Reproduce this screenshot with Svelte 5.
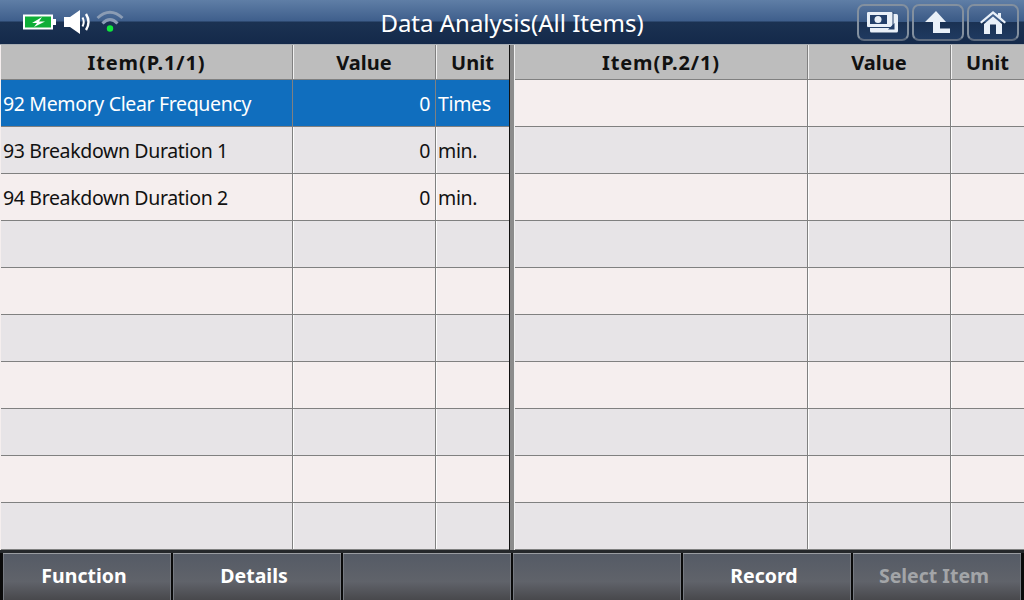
<script>
	const leftRows = [
		{ item: '92 Memory Clear Frequency', value: '0', unit: 'Times' },
		{ item: '93 Breakdown Duration 1', value: '0', unit: 'min.' },
		{ item: '94 Breakdown Duration 2', value: '0', unit: 'min.' }
	];
	const rowCount = Array.from({ length: 10 });
	const footer = [
		{ label: 'Function' },
		{ label: 'Details' },
		{ label: '' },
		{ label: '' },
		{ label: 'Record' },
		{ label: 'Select Item', disabled: true }
	];
</script>

{#snippet table(title, rows, side)}
	<div class="table {side}">
		<div class="row head">
			<div class="cell">{title}</div>
			<div class="cell">Value</div>
			<div class="cell">Unit</div>
		</div>
		{#each rowCount as _, i}
			<div class="row body" class:odd={i % 2 === 1} class:selected={rows[i] && i === 0}>
				<div class="cell item">{rows[i]?.item ?? ''}</div>
				<div class="cell value">{rows[i]?.value ?? ''}</div>
				<div class="cell unit">{rows[i]?.unit ?? ''}</div>
			</div>
		{/each}
	</div>
{/snippet}

<div class="screen">
	<header class="topbar">
		<div class="status">
			<svg width="34" height="16" viewBox="0 0 34 16">
				<rect x="1" y="1.5" width="28" height="13" fill="#0fae37" stroke="#fff" stroke-width="2" />
				<rect x="30" y="5" width="3" height="6" fill="#fff" />
				<path d="M19 3 L9 9 H14 L11 13 L22 7.5 H16 Z" fill="#fff" />
			</svg>
			<svg width="28" height="24" viewBox="0 0 28 24">
				<path d="M0 7 H6 L16 0 V24 L6 17 H0 Z" fill="#fff" />
				<path d="M18.5 7.5 Q21 12 18.5 16.5" fill="none" stroke="#fff" stroke-width="2" />
				<path d="M22 4 Q27 12 22 20" fill="none" stroke="#fff" stroke-width="2.4" />
			</svg>
			<svg class="wifi" width="28" height="26" viewBox="0 0 28 26">
				<path d="M1.5 10 Q14 -1.5 26.5 10" fill="none" stroke="#8b9cb4" stroke-width="3" />
				<path d="M6.5 15.5 Q14 7.5 21.5 15.5" fill="none" stroke="#8b9cb4" stroke-width="3" />
				<circle cx="14" cy="20.5" r="3.2" fill="#10e83c" />
			</svg>
		</div>
		<h1>Data Analysis(All Items)</h1>
		<div class="tools">
			<button type="button" aria-label="Screenshot">
				<svg width="32" height="21" viewBox="0 0 32 21">
					<rect x="3" y="2" width="28" height="18.5" rx="1.5" fill="#e9f0f8" />
					<rect x="-0.5" y="-0.5" width="27" height="16.5" fill="#24406a" />
					<rect x="0" y="0" width="25.5" height="15" rx="1" fill="#e9f0f8" />
					<rect x="3" y="3" width="17" height="9" fill="#24406a" />
					<circle cx="11" cy="7.5" r="3.5" fill="#e9f0f8" />
					<path d="M21 17.5 L27.5 11 V17.5 Z" fill="#24406a" />
				</svg>
			</button>
			<button type="button" aria-label="Back">
				<svg width="26" height="22" viewBox="0 0 26 22">
					<path d="M11 0 L21 11 H15 V17.5 H25 V22 H8 V11 H0 Z" fill="#e9f0f8" />
				</svg>
			</button>
			<button type="button" aria-label="Home">
				<svg width="26" height="23" viewBox="0 0 26 23">
					<path d="M13 0 L18 4 V2 H21 V6.5 L26 11 L24.5 12.5 L13 3 L1.5 12.5 L0 11 Z" fill="#e9f0f8" />
					<path d="M13 5.5 L22 13 V23 H16 V13.5 H10 V23 H4 V13 Z" fill="#e9f0f8" />
				</svg>
			</button>
		</div>
	</header>

	<main class="tables">
		{@render table('Item(P.1/1)', leftRows, 'left')}
		<div class="divider"></div>
		{@render table('Item(P.2/1)', [], 'right')}
	</main>

	<footer class="bottombar">
		{#each footer as btn}
			<button type="button" class:disabled={btn.disabled}>{btn.label}</button>
		{/each}
	</footer>
</div>

<style>
	:global(body) {
		margin: 0;
		background: #000;
	}

	.screen {
		width: 1024px;
		height: 600px;
		display: flex;
		flex-direction: column;
		overflow: hidden;
		font-family: "Noto Sans", sans-serif;
		background: #1e1e20;
	}

	.topbar {
		height: 44px;
		flex: none;
		display: flex;
		align-items: center;
		position: relative;
		background: linear-gradient(#5f7ea6 0, #3f5f8c 21px, #1b3252 22px, #14294a 44px);
	}

	.status {
		display: flex;
		align-items: center;
		margin-left: 23px;
		gap: 7px;
	}

	.wifi {
		margin: -3px 0 0 -3px;
	}

	h1 {
		position: absolute;
		left: 0;
		right: 0;
		top: 7px;
		margin: 0;
		text-align: center;
		color: #fff;
		font-size: 24px;
		line-height: 32px;
		font-weight: 400;
	}

	.tools {
		margin-left: auto;
		display: flex;
		gap: 3px;
		padding-right: 5px;
		align-items: center;
	}

	.tools button {
		width: 52px;
		height: 37px;
		padding: 0;
		display: flex;
		align-items: center;
		justify-content: center;
		box-sizing: border-box;
		border: 2px solid #83909f;
		border-bottom-color: #5c6a7e;
		border-radius: 7px;
		background: linear-gradient(#54719a 0, #3a5a86 48%, #1a3153 49%, #1f3a60 100%);
	}

	.tables {
		height: 506px;
		flex: none;
		display: flex;
		background: #f5eeee;
		border-top: 1px solid #a8adb3;
		box-sizing: border-box;
		padding-left: 1px;
	}

	.table {
		display: flex;
		flex-direction: column;
	}

	.table.left {
		width: 508px;
		--first-col: 292px;
	}

	.table.right {
		width: 509px;
		--first-col: 293px;
	}

	.divider {
		width: 6px;
		flex: none;
		background: linear-gradient(90deg, #111 0 1px, #8c8c8c 1px 5px, #f0f0f0 5px);
	}

	.row {
		display: grid;
		grid-template-columns: var(--first-col) 143px 1fr;
		box-sizing: border-box;
	}

	.head {
		height: 35px;
		background: #bdbdbd;
		border-bottom: 1px solid #808080;
		font-weight: 700;
		font-size: 20px;
		color: #111;
	}

	.head .cell {
		display: flex;
		align-items: center;
		justify-content: center;
		box-shadow: 1px 0 0 #f0f0f0;
	}

	.head .cell:first-child {
		letter-spacing: 0.9px;
	}

	.head .cell:last-child {
		border-right: 0;
		box-shadow: none;
	}

	.body {
		height: 47px;
		background: #f5eeee;
		border-bottom: 1px solid #808080;
		font-size: 19.5px;
		letter-spacing: -0.35px;
		color: #111;
	}

	.body.odd {
		background: #e7e4e7;
	}

	.body.selected {
		background: #106ebe;
		color: #fff;
	}

	.cell {
		box-sizing: border-box;
		border-right: 1px solid #808080;
		white-space: nowrap;
		overflow: hidden;
	}

	.body .cell {
		display: flex;
		align-items: center;
		padding: 0 2px;
		box-shadow: 1px 0 0 #fdfdfd;
	}

	.body.selected .cell {
		box-shadow: none;
	}

	.body .cell:last-child {
		border-right: 0;
		box-shadow: none;
	}

	.value {
		justify-content: flex-end;
		padding-right: 5px !important;
	}

	.bottombar {
		flex: 1;
		display: grid;
		grid-template-columns: repeat(6, 168px);
		gap: 2px;
		padding: 3px 0 0 3px;
		box-sizing: border-box;
		background: linear-gradient(#25282b 0 3px, #0a0a0a 3px);
	}

	.bottombar button {
		border: 0;
		border-top: 1px solid #9a9da2;
		box-shadow: inset 1px 0 0 #767a81, inset -1px 0 0 #767a81;
		padding: 0 6px 3px 0;
		font: 700 19.5px "Noto Sans", sans-serif;
		color: #fff;
		background: linear-gradient(#555b66, #60636a 60%, #48484c);
	}

	.bottombar button.disabled {
		color: #a3a5a8;
	}
</style>
